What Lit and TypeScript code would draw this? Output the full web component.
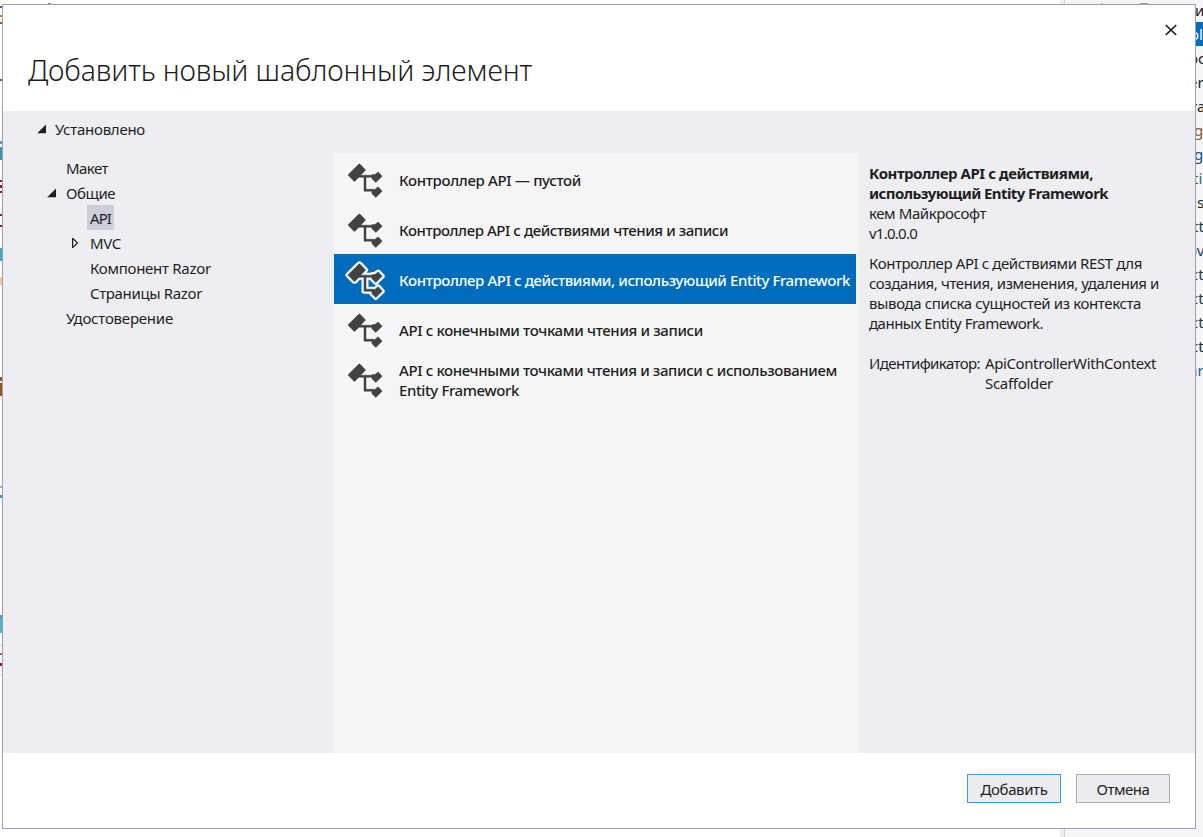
import { LitElement, html, css, svg } from "lit";
import { customElement, property, state } from "lit/decorators.js";

/** A single line of text, tracked so that it spans a given measure. */
@customElement("fit-line")
class FitLine extends LitElement {
  @property() text = "";
  @property({ type: Number }) measure = 0;
  @state() private tracking = 0;

  static styles = css`
    :host { display: block; white-space: nowrap; }
  `;

  async firstUpdated() {
    const span = this.renderRoot.querySelector("span")!;
    const natural = span.getBoundingClientRect().width;
    if (this.measure) this.tracking = (this.measure - natural) / this.text.length;
  }

  render() {
    return html`<span style="letter-spacing:${this.tracking}px">${this.text}</span>`;
  }
}

type Line = [string, number];

@customElement("scaffold-icon")
class ScaffoldIcon extends LitElement {
  @property({ type: Boolean, reflect: true }) selected = false;

  static styles = css`
    :host { display: block; width: 50px; height: 50px; }
    svg { display: block; }
    .halo { fill: #fff; stroke: #fff; stroke-width: 5; stroke-linejoin: round; opacity: 0.4; }
    :host([selected]) .halo { opacity: 0.95; }
    .ink { fill: #424242; stroke: #424242; stroke-width: 0.5; stroke-linejoin: round; }
  `;

  render() {
    const shape = svg`
      <path d="M7.9 20 18.9 9.1Q19.4 8.7 19.9 9.1L25.6 15 15 26.3H14Z"/>
      <path d="M17 20.2H33V22.2H26V34.2H33V36.2H24V22.2H17Z"/>
      <path d="M32.2 19.6H34.8L38.2 17 42.2 21.2 35.8 27.5 31.8 23.6Z"/>
      <path d="M32.2 34.4H34.8L38.2 31.8 42.2 36.2 35.8 42.5 31.8 38.6Z"/>`;
    return html`<svg width="50" height="50" viewBox="0 0 50 50">
      <g class="halo">${shape}</g>
      <g class="ink">${shape}</g>
    </svg>`;
  }
}

@customElement("app-root")
class AppRoot extends LitElement {
  private tree: { text: string; w: number; level: number; open?: boolean; closed?: boolean; current?: boolean }[] = [
    { text: "Макет", w: 42, level: 1 },
    { text: "Общие", w: 49, level: 1, open: true },
    { text: "API", w: 21, level: 2, current: true },
    { text: "MVC", w: 31, level: 2, closed: true },
    { text: "Компонент Razor", w: 121, level: 2 },
    { text: "Страницы Razor", w: 112, level: 2 },
    { text: "Удостоверение", w: 107, level: 1 },
  ];

  private templates: { lines: Line[]; selected?: boolean }[] = [
    { lines: [["Контроллер API — пустой", 182]] },
    { lines: [["Контроллер API с действиями чтения и записи", 329]] },
    { lines: [["Контроллер API с действиями, использующий Entity Framework", 451]], selected: true },
    { lines: [["API с конечными точками чтения и записи", 304]] },
    { lines: [["API с конечными точками чтения и записи с использованием", 438], ["Entity Framework", 120]] },
  ];

  private explorer: [string, number, string][] = [
    ["и", 1195, "#1e1e1e"], ["ol", 1190, "#fff"], ["oc", 1189, "#1e1e1e"], ["er", 1189, "#1e1e1e"],
    ["ra", 1191, "#1e1e1e"], ["gi", 1194, "#8a5a1c"], ["g", 1194, "#1b4a7a"], ["ti", 1193, "#2f5f8f"],
    ["s", 1197, "#1e1e1e"], ["tt", 1193, "#1b3a5a"], ["ov", 1188, "#1b3a5a"], ["ct", 1191, "#1b3a5a"],
    ["ct", 1191, "#1b3a5a"], ["ct", 1191, "#1b3a5a"], ["ct", 1191, "#1b2f4a"], ["ar", 1189, "#1b5a9a"],
  ];

  private marks: [number, number, string][] = [
    [6, 2, "#7a5a30"], [15, 2, "#c08a20"], [22, 2, "#8a5a20"], [79, 2, "#7a5a30"],
    [141, 3, "#4aa3bd"], [147, 13, "#3d93b0"], [180, 2, "#a31515"], [185, 3, "#a31515"],
    [191, 2, "#a31515"], [214, 2, "#a31515"], [225, 2, "#a31515"], [248, 13, "#3fa6cc"],
    [277, 8, "#efc8a0"], [377, 4, "#8a6020"], [383, 13, "#9a5418"], [486, 2, "#8ab8c8"],
    [495, 3, "#3d93b0"], [615, 3, "#5a9ab0"], [618, 15, "#4ab0dc"], [643, 4, "#eeeef2"],
    [653, 2, "#b06030"], [663, 3, "#a31515"], [673, 3, "#eeeef2"],
  ];

  static styles = css`
    :host {
      display: block; position: relative; width: 1203px; height: 837px; overflow: hidden;
      box-sizing: border-box; padding: 4px 0 0 2px; background: #fff; color: #1e1e1e;
      font: 15px/20px "Noto Sans", "Open Sans", sans-serif;
    }
    .backdrop { position: absolute; inset: 0; display: block; }
    .backdrop text { font: 15px "Noto Sans", "Open Sans", sans-serif; }
    .dialog {
      position: relative; box-sizing: border-box; width: 1194px; height: 825px;
      border: 1px solid #9b9fb9; background: #fff; display: flex; flex-direction: column;
    }
    header { height: 106px; display: flex; justify-content: space-between; flex: none; }
    .title { padding: 45px 0 0 25px; font-size: 28.5px; line-height: 40px; font-weight: 340; }
    .close { padding: 19px 18px 0 0; }
    .close svg { display: block; }
    .body { height: 642px; flex: none; display: flex; background: #eeeef2; }
    .nav { width: 330px; flex: none; padding-top: 8px; box-sizing: border-box; }
    .root { display: flex; padding-left: 34px; gap: 8px; align-items: center; margin-bottom: 16px; }
    .arrow { width: 10px; height: 10px; display: block; flex: none; }
    .node { display: flex; height: 25px; align-items: center; }
    .level1 { padding-left: 44px; gap: 6px; }
    .level2 { padding-left: 67px; gap: 7px; }
    .label { display: flex; align-items: center; height: 25px; padding: 0 3px; }
    .current { background: #cccedb; }
    .list { width: 525px; box-sizing: border-box; flex: none; margin-top: 42px; padding: 1px 2px 0 1px; background: #f5f5f5; font-weight: 500; }
    .row { display: flex; height: 50px; align-items: center; }
    .row scaffold-icon { margin: 2px 9px 0 6px; }
    .row .lines { padding-top: 2px; }
    .selected { background: #006cbe; color: #fff; }
    .info { padding: 52px 0 0 11px; }
    .bold { font-weight: 700; }
    .gap10 { margin-top: 10px; }
    .ident { margin-top: 20px; display: flex; gap: 5px; }
    footer { flex: 1; display: flex; justify-content: flex-end; gap: 15px; padding: 21px 25px 0 0; }
    .button {
      width: 94px; height: 29px; box-sizing: border-box; border: 1px solid #acacac; background: #ececf0;
      display: flex; justify-content: center; padding-top: 4px;
    }
    .primary { border-color: #3399ff; }
  `;

  private line(l: Line) {
    return html`<fit-line .text=${l[0]} .measure=${l[1]}></fit-line>`;
  }

  private arrow(open: boolean, closed: boolean) {
    return html`<svg class="arrow" viewBox="0 0 10 10">
      ${open ? svg`<path d="M0.2 9.2H9V0.4Z" fill="#1e1e1e"/>` : ""}
      ${closed ? svg`<path d="M2.6 0.2V9.6L7.4 4.9Z" fill="none" stroke="#1e1e1e" stroke-width="1.2"/>` : ""}
    </svg>`;
  }

  render() {
    return html`
      <svg class="backdrop" width="1203" height="837">
        <rect x="1060" width="4" height="837" fill="#eeeef2"/>
        <rect x="1064" width="1" height="837" fill="#cccedb"/>
        <rect x="1065" width="138" height="837" fill="#f5f5f5"/>
        <rect x="1100" y="22" width="103" height="24" fill="#006cbe"/>
        <rect x="48" y="3" width="3" height="1" fill="#7d90b5"/>
        <rect x="1101" y="3" width="2" height="1" fill="#bbb"/>
        <rect x="1140" y="3" width="8" height="1" fill="#999"/>
        ${this.explorer.map(([t, x, c], i) => svg`<text x=${x} y=${16 + i * 24} fill=${c}>${t}</text>`)}
        ${this.marks.map(([y, h, c]) => svg`<rect x="0" y=${y} width="2" height=${h} fill=${c}/>`)}
      </svg>
      <div class="dialog">
        <header>
          <div class="title">${this.line(["Добавить новый шаблонный элемент", 504])}</div>
          <div class="close">
            <svg width="12" height="12" viewBox="0 0 12 12">
              <path d="M0.8 1 11.2 11M11.2 1 0.8 11" stroke="#1e1e1e" stroke-width="1.7" fill="none"/>
            </svg>
          </div>
        </header>
        <div class="body">
          <div class="nav">
            <div class="root">${this.arrow(true, false)}${this.line(["Установлено", 90])}</div>
            ${this.tree.map((n) => html`
              <div class="node level${n.level}">
                ${this.arrow(!!n.open, !!n.closed)}
                <div class="label ${n.current ? "current" : ""}">${this.line([n.text, n.w])}</div>
              </div>`)}
          </div>
          <div class="list">
            ${this.templates.map((t) => html`
              <div class="row ${t.selected ? "selected" : ""}">
                <scaffold-icon ?selected=${!!t.selected}></scaffold-icon>
                <div class="lines">${t.lines.map((l) => this.line(l))}</div>
              </div>`)}
          </div>
          <div class="info">
            <div class="bold">
              ${this.line(["Контроллер API с действиями,", 224])}
              ${this.line(["использующий Entity Framework", 239])}
            </div>
            ${this.line(["кем Майкрософт", 117])}
            ${this.line(["v1.0.0.0", 48])}
            <div class="gap10">
              ${this.line(["Контроллер API с действиями REST для", 273])}
              ${this.line(["создания, чтения, изменения, удаления и", 290])}
              ${this.line(["вывода списка сущностей из контекста", 272])}
              ${this.line(["данных Entity Framework.", 174])}
            </div>
            <div class="ident">
              ${this.line(["Идентификатор:", 111])}
              <div>
                ${this.line(["ApiControllerWithContext", 171])}
                ${this.line(["Scaffolder", 68])}
              </div>
            </div>
          </div>
        </div>
        <footer>
          <div class="button primary">${this.line(["Добавить", 67])}</div>
          <div class="button">${this.line(["Отмена", 53])}</div>
        </footer>
      </div>`;
  }
}
